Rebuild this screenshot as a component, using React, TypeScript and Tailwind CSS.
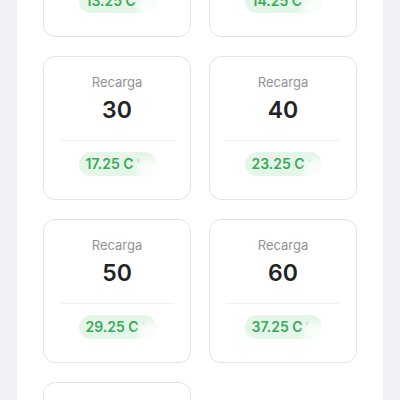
import React from "react";

const items = [
  { amount: "10", price: "13.25" },
  { amount: "20", price: "14.25" },
  { amount: "30", price: "17.25" },
  { amount: "40", price: "23.25" },
  { amount: "50", price: "29.25" },
  { amount: "60", price: "37.25" },
  { amount: "70", price: "45.25" },
];

function Card({ amount, price }: { amount: string; price: string }) {
  return (
    <div className="h-[144px] rounded-[12px] border-[1.5px] border-[#e4e4e7] bg-white flex flex-col items-center pt-[16px]">
      <div className="h-[18px] leading-[18px] text-[13px] text-[#929296]">Recarga</div>
      <div className="mt-[5px] h-[28px] leading-[28px] text-[23px] font-semibold text-[#232325]">{amount}</div>
      <div className="mt-[16px] h-px w-[114px] bg-[#f1f1f3]" />
      <div className="relative mt-[11px] h-[24px] w-[77px] rounded-full bg-[#e4f6e8] flex items-center pl-[7px] overflow-visible">
        <span className="text-[14px] font-semibold text-[#3aa95c] leading-none whitespace-nowrap">
          {price} C
        </span>
        <span className="ml-[3px] text-[12px] text-[#9bd3ab] leading-none">'</span>
        <div className="absolute right-[-5px] top-[7px] h-[24px] w-[24px] rounded-full bg-white/80 blur-[3px]" />
      </div>
    </div>
  );
}

export default function App() {
  return (
    <div className="h-[400px] w-[400px] overflow-hidden bg-[#f2f2f6] flex justify-center" style={{ fontFamily: "Inter, 'Noto Sans', sans-serif" }}>
      <div className="w-[366px] h-[400px] bg-white px-[26px] overflow-hidden">
        <div className="-mt-[107px] grid grid-cols-2 gap-x-[18px] gap-y-[19px]">
          {items.map((it) => (
            <Card key={it.amount} amount={it.amount} price={it.price} />
          ))}
        </div>
      </div>
    </div>
  );
}
